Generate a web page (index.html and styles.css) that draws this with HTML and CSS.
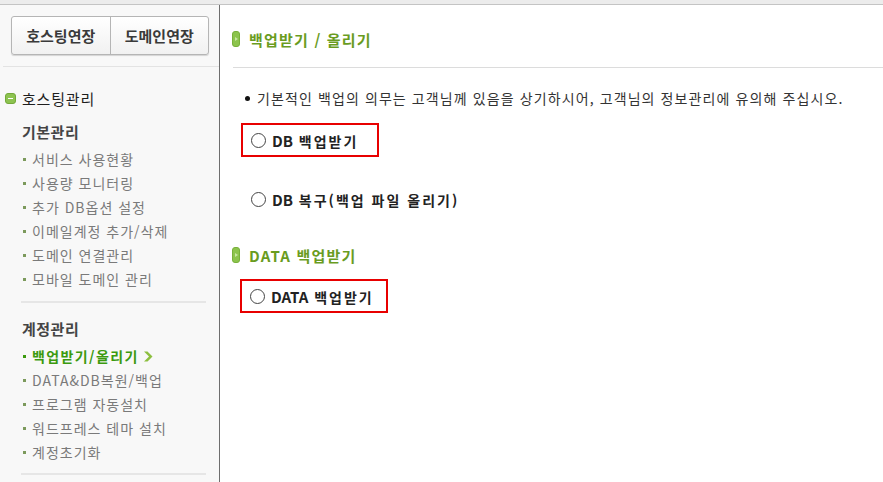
FILE: index.html
```html
<!DOCTYPE html>
<html lang="ko">
<head>
    <meta charset="UTF-8">
    <meta name="viewport" content="width=device-width, initial-scale=1.0">
    <title>백업받기 / 올리기</title>
    <link rel="stylesheet" href="styles.css">
</head>
<body>
    <div class="topbar"></div>
    <div class="wrap">
        <aside class="side">
            <div class="ext-btns">
                <a href="#" class="ext-btn">호스팅연장</a>
                <a href="#" class="ext-btn">도메인연장</a>
            </div>
            <div class="side-line"></div>

            <h2 class="side-title"><span class="minus-icon"></span>호스팅관리</h2>

            <h3 class="group-title">기본관리</h3>
            <ul class="menu">
                <li><a href="#">서비스 사용현황</a></li>
                <li><a href="#">사용량 모니터링</a></li>
                <li><a href="#">추가 DB옵션 설정</a></li>
                <li><a href="#">이메일계정 추가/삭제</a></li>
                <li><a href="#">도메인 연결관리</a></li>
                <li><a href="#">모바일 도메인 관리</a></li>
            </ul>
            <div class="group-line"></div>

            <h3 class="group-title group-title-2">계정관리</h3>
            <ul class="menu">
                <li class="on"><a href="#">백업받기/올리기</a>
                    <svg class="chev" width="10" height="11" viewBox="0 0 10 11"><path d="M1 0.5 L4.5 0.5 L9.5 5.5 L4.5 10.5 L1 10.5 L6 5.5 Z" fill="#8cbf3f"/></svg>
                </li>
                <li><a href="#">DATA&amp;DB복원/백업</a></li>
                <li><a href="#">프로그램 자동설치</a></li>
                <li><a href="#">워드프레스 테마 설치</a></li>
                <li><a href="#">계정초기화</a></li>
            </ul>
            <div class="group-line group-line-2"></div>
        </aside>

        <main class="content">
            <h2 class="sub-title"><span class="bar-icon"></span>백업받기 / 올리기</h2>
            <div class="content-line"></div>

            <p class="notice">기본적인 백업의 의무는 고객님께 있음을 상기하시어, 고객님의 정보관리에 유의해 주십시오.</p>

            <label class="opt opt-box opt-db">
                <input type="radio" name="backup" value="db_down">
                <span><span class="en">DB</span> 백업받기</span>
            </label>

            <label class="opt opt-plain">
                <input type="radio" name="backup" value="db_up">
                <span><span class="en">DB</span> 복구(백업 파일 올리기)</span>
            </label>

            <h2 class="sub-title sub-title-2"><span class="bar-icon"></span>DATA 백업받기</h2>

            <label class="opt opt-box opt-data">
                <input type="radio" name="data" value="data_down">
                <span><span class="en">DATA</span> 백업받기</span>
            </label>
        </main>
    </div>
</body>
</html>
```

FILE: styles.css
```css
* {
    box-sizing: border-box;
}

body {
    margin: 0;
    height: 482px;
    overflow: hidden;
    font-family: "Noto Sans CJK KR", "Noto Sans", sans-serif;
    font-size: 14px;
    color: #333;
    background: #fff;
}

a {
    text-decoration: none;
    color: inherit;
}

.topbar {
    height: 5px;
    background: #ececec;
    border-bottom: 1px solid #c4c4c4;
}

.wrap {
    display: flex;
    height: 477px;
}

/* 왼쪽 메뉴 */
.side {
    width: 220px;
    flex-shrink: 0;
    background: #f8f8f8;
    border-right: 1px solid #6e6e6e;
}

.ext-btns {
    display: flex;
    width: 198px;
    height: 39px;
    margin: 11px 0 0 11px;
    border: 1px solid #b5b5b5;
    border-radius: 3px;
    background: linear-gradient(#ffffff, #f1f1f1);
    box-shadow: 0 1px 1px rgba(0, 0, 0, 0.15);
}

.ext-btn {
    flex: 1;
    display: flex;
    align-items: center;
    justify-content: center;
    font-size: 15px;
    font-weight: bold;
    color: #3a3a3a;
}

.ext-btn + .ext-btn {
    border-left: 1px solid #b5b5b5;
}

.side-line {
    height: 1px;
    margin: 11px 0 0 3px;
    background: #e3e3e3;
}

.side-title {
    display: flex;
    align-items: center;
    margin: 21px 0 0 5px;
    height: 20px;
    font-size: 15px;
    font-weight: normal;
    color: #1e1e1e;
    letter-spacing: 0.8px;
}

.minus-icon {
    position: relative;
    width: 11px;
    height: 11px;
    margin-right: 6px;
    border-radius: 3px;
    background: #8dc350;
    border: 1px solid #74a93a;
}

.minus-icon::after {
    content: "";
    position: absolute;
    left: 2px;
    top: 4px;
    width: 5px;
    height: 1px;
    background: #fff;
}

.group-title {
    margin: 14px 0 0 22px;
    height: 20px;
    line-height: 20px;
    font-size: 15px;
    font-weight: bold;
    color: #454545;
    letter-spacing: 0.5px;
}

.group-title-2 {
    margin-top: 16px;
}

.menu {
    list-style: none;
    margin: 5px 0 0 0;
    padding: 0 0 0 23px;
}

.menu li {
    display: flex;
    align-items: center;
    height: 24px;
    font-size: 14px;
    color: #7a7a7a;
    letter-spacing: 1px;
}

.menu li::before {
    content: "";
    width: 3px;
    height: 3px;
    margin-right: 6px;
    background: #7c9a5c;
}

.menu li.on {
    color: #3b9a0e;
    font-weight: bold;
    letter-spacing: 1.4px;
}

.menu li.on::before {
    background: #3b9a0e;
}

.chev {
    margin-left: 4px;
}

.group-line {
    width: 185px;
    height: 2px;
    margin: 10px 0 0 21px;
    background: #e6e6e6;
}

.group-line-2 {
    margin-top: 9px;
}

/* 본문 */
.content {
    flex: 1;
    padding: 24px 0 0 12px;
}

.sub-title {
    display: flex;
    align-items: center;
    height: 20px;
    margin: 0;
    font-size: 15px;
    font-weight: bold;
    color: #6a9c1f;
    letter-spacing: 1.2px;
}

.sub-title-2 {
    margin-top: 29px;
}

.bar-icon {
    position: relative;
    width: 8px;
    height: 16px;
    margin-right: 9px;
    border-radius: 3px;
    background: #8cc44c;
    border: 1px solid #78b03a;
}

.bar-icon::after {
    content: "";
    position: absolute;
    left: 2px;
    top: 5px;
    border-left: 3px solid #c8e6a4;
    border-top: 2px solid transparent;
    border-bottom: 2px solid transparent;
}

.content-line {
    height: 1px;
    margin: 18px 0 0 1px;
    background: #dcdcdc;
}

.notice {
    display: flex;
    align-items: center;
    height: 20px;
    margin: 20px 0 0 13px;
    font-size: 14px;
    color: #333;
    letter-spacing: 1.1px;
}

.notice::before {
    content: "";
    width: 5px;
    height: 5px;
    margin-right: 7px;
    border-radius: 50%;
    background: #111;
}

.opt {
    display: flex;
    align-items: center;
    height: 34px;
    margin-left: 9px;
    padding-left: 8px;
    border: 2px solid transparent;
    font-size: 14px;
    font-weight: bold;
    color: #222;
    letter-spacing: 2px;
    cursor: pointer;
}

.opt .en {
    font-size: 15px;
    letter-spacing: 0;
}

.opt input {
    appearance: none;
    width: 15px;
    height: 15px;
    margin: 0 6px 0 0;
    border: 1px solid #444;
    border-radius: 50%;
    background: #fff;
}

.opt-box {
    border-color: #e80000;
}

.opt-db {
    width: 138px;
    margin-top: 15px;
}

.opt-plain {
    margin-top: 25px;
}

.opt-data {
    width: 148px;
    margin-top: 14px;
    margin-left: 8px;
}
```
